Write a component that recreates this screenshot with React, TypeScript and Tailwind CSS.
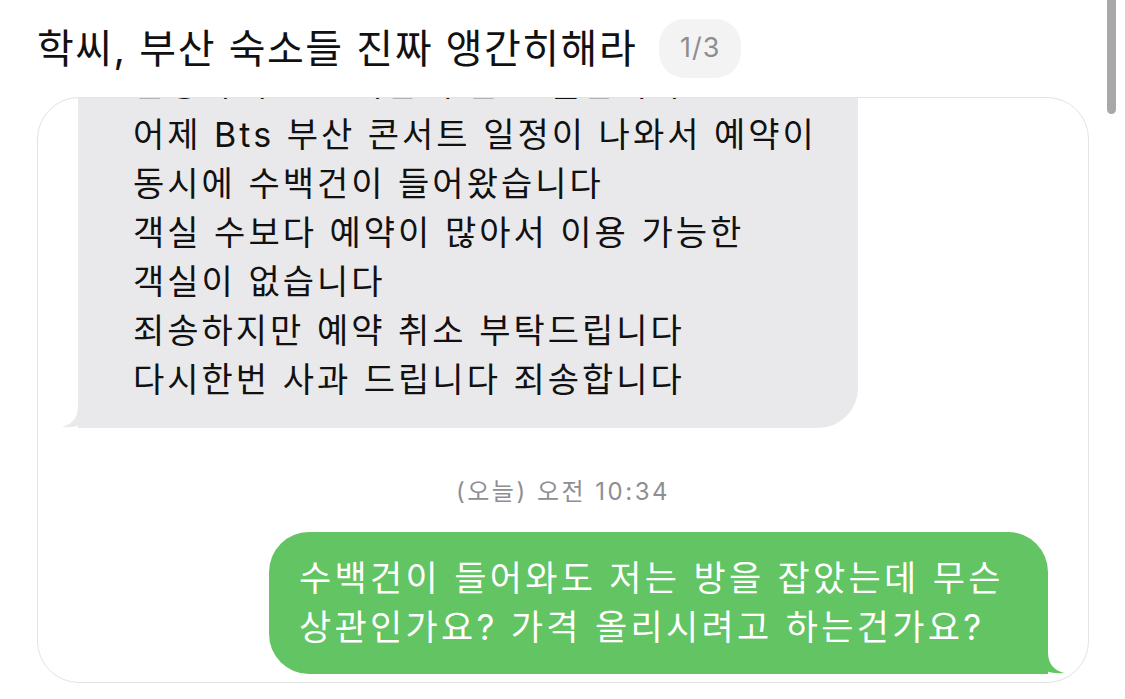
const font = "font-['Inter','Noto_Sans_CJK_KR',sans-serif]";

function Tail({ color, flip }: { color: string; flip?: boolean }) {
  return (
    <svg
      className={
        "absolute bottom-0 h-[36px] w-[52px] " +
        (flip ? "right-[-17px] -scale-x-100" : "left-[-17px]")
      }
      viewBox="0 0 52 36"
    >
      <path
        d="M17 0 L17 14 C17 26 11 32 1 35 C12 36 23 33 32 27 C36 32 43 35 52 36 L52 0 Z"
        fill={color}
      />
    </svg>
  );
}

const grayLines = [
  "어제 Bts 부산 콘서트 일정이 나와서 예약이",
  "동시에 수백건이 들어왔습니다",
  "객실 수보다 예약이 많아서 이용 가능한",
  "객실이 없습니다",
  "죄송하지만 예약 취소 부탁드립니다",
  "다시한번 사과 드립니다 죄송합니다",
];

export default function App() {
  return (
    <div className={"relative h-[699px] w-[1125px] overflow-hidden bg-white " + font}>
      <div className="absolute right-[9px] top-[-6px] h-[120px] w-[9px] rounded-full bg-[#a8a8a8]" />

      <div className="pl-[37px]">
        <div className="flex h-[95px] items-center gap-[22px] pt-[2px]">
          <h1 className="text-[40px] font-normal tracking-[1.5px] text-[#111]">
            학씨, 부산 숙소들 진짜 앵간히해라
          </h1>
          <span className="flex h-[59px] w-[82px] items-center justify-center rounded-[26px] bg-[#f3f3f3] text-[27px] tracking-[1px] text-[#8d8d8d]">
            1/3
          </span>
        </div>

        <div className="mt-[2px] flex h-[586px] w-[1052px] flex-col overflow-hidden rounded-[42px] border border-[#e3e3e3]">
          {/* screenshot starts mid-bubble: previous line only peeks in */}
          <div className="relative ml-[40px] mt-[-37px] w-[780px] rounded-[40px] rounded-bl-none bg-[#e9e9eb] pb-[24px] pl-[55px] text-[34px] leading-[49px] tracking-[3px] text-[#111]">
            <div className="h-[49px] overflow-hidden whitespace-nowrap leading-[45px]">
              안녕하세요 고객님 부산 호텔입니다
            </div>
            {grayLines.map((l) => (
              <div key={l} className="whitespace-nowrap">
                {l}
              </div>
            ))}
            <Tail color="#e9e9eb" />
          </div>

          <div className="mt-[49px] text-center text-[24px] leading-[30px] tracking-[2.5px] text-[#8e8e93]">
            (오늘) 오전 10:34
          </div>

          <div className="relative mr-[40px] mt-[25px] w-[779px] self-end rounded-[40px] rounded-br-none bg-[#62c462] py-[22px] pl-[30px] text-[35px] leading-[49px] tracking-[3.3px] text-white">
            <div className="whitespace-nowrap">수백건이 들어와도 저는 방을 잡았는데 무슨</div>
            <div className="whitespace-nowrap">상관인가요? 가격 올리시려고 하는건가요?</div>
            <Tail color="#62c462" flip />
          </div>
        </div>
      </div>
    </div>
  );
}
